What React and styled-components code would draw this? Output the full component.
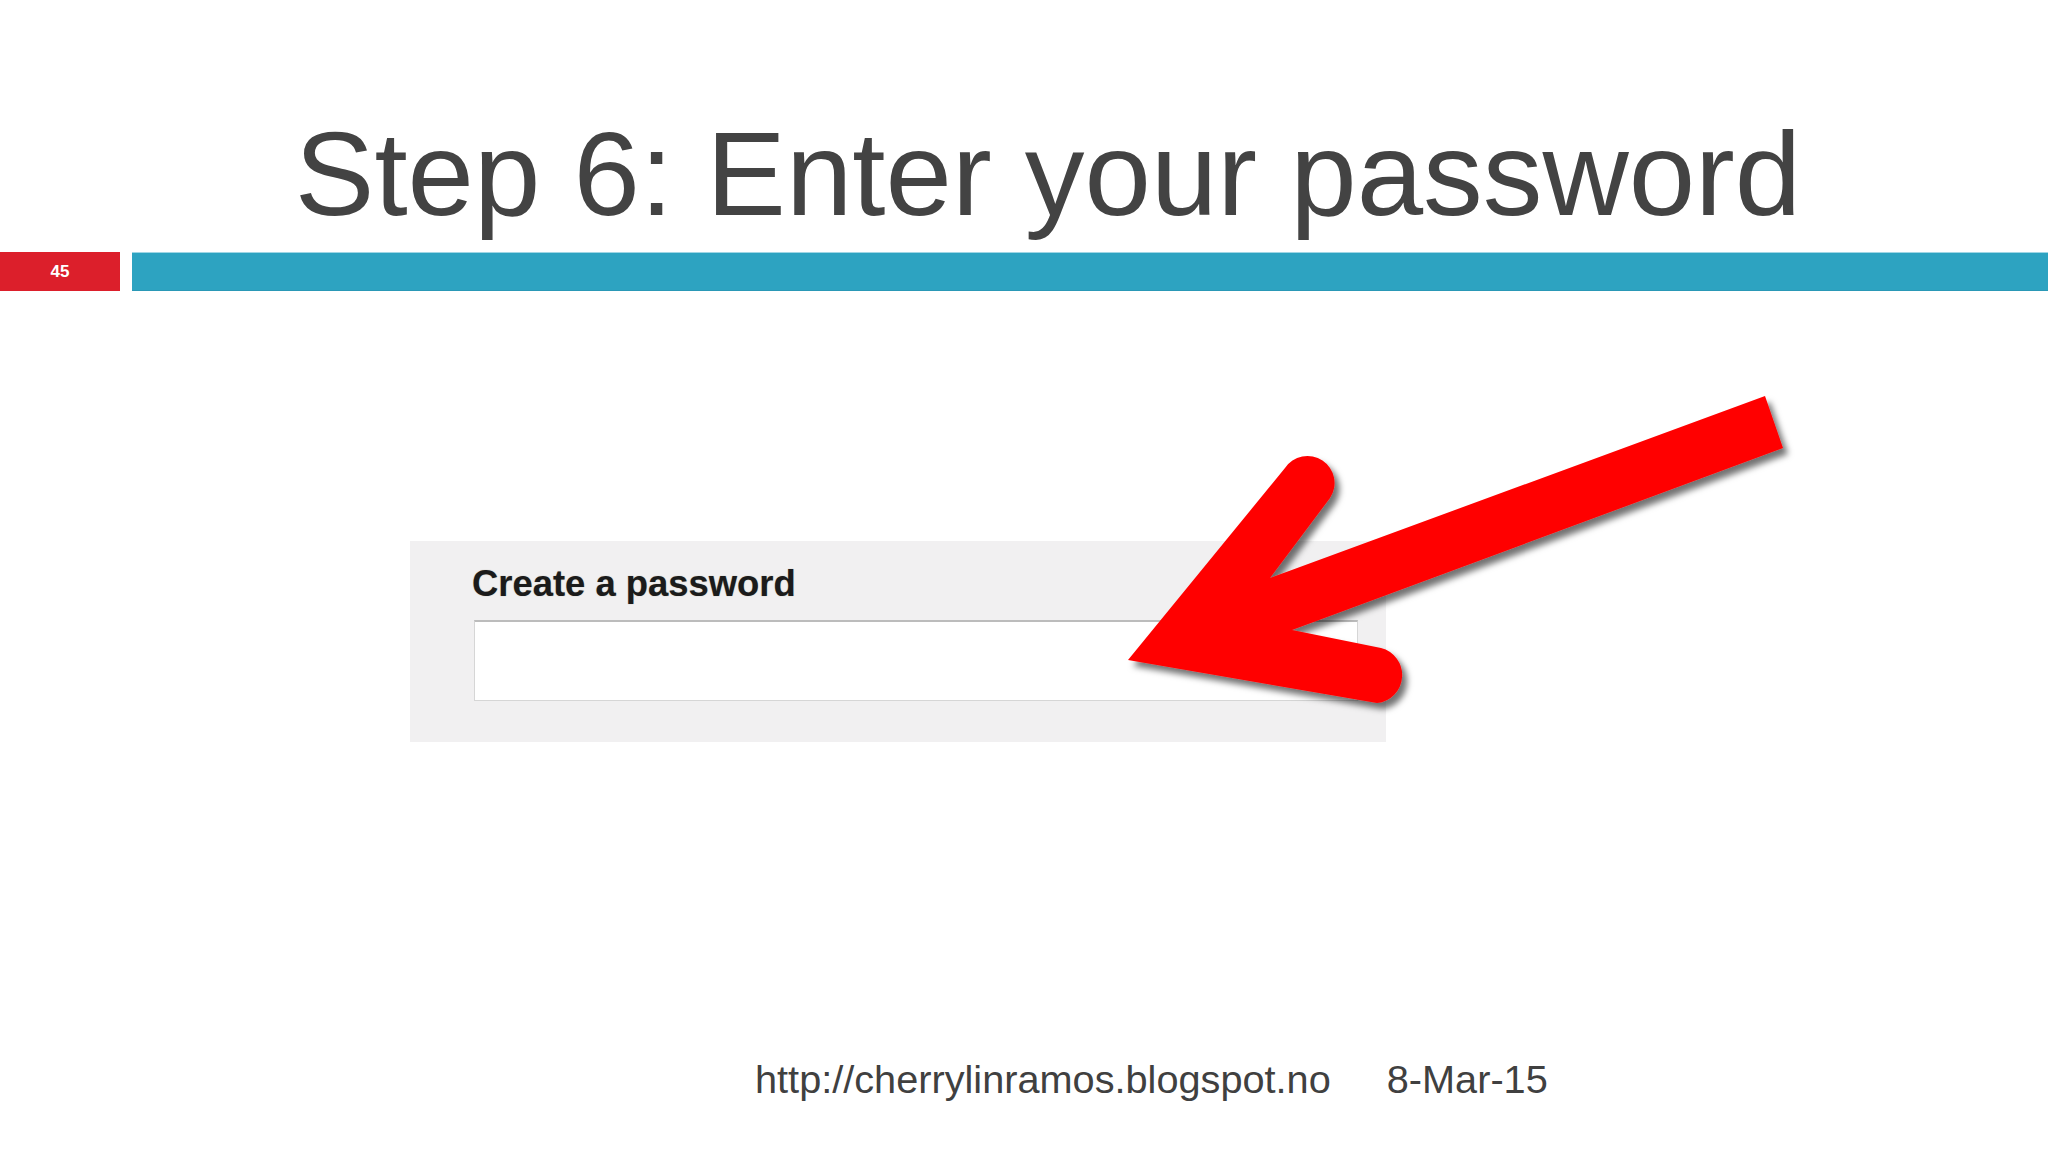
import React from 'react';
import styled, { createGlobalStyle } from 'styled-components';

const GlobalStyle = createGlobalStyle`
  html, body {
    margin: 0;
    padding: 0;
    background: #ffffff;
  }
  body {
    font-family: "Liberation Sans", Arial, sans-serif;
  }
`;

export default function App() {
  return (
    <>
      <GlobalStyle />
      <Slide>
        <Title>Step 6: Enter your password</Title>
        <BarRow>
          <SlideNumber>45</SlideNumber>
          <AccentBar />
        </BarRow>
        <Stage>
          <PasswordPanel>
            <FieldLabel>Create a password</FieldLabel>
            <PasswordInput type="password" />
          </PasswordPanel>
        </Stage>
        <Footer>
          <FooterText>http://cherrylinramos.blogspot.no</FooterText>
          <FooterText>8-Mar-15</FooterText>
        </Footer>
        <ArrowOverlay viewBox="0 0 2048 1152" width="2048" height="1152">
          <defs>
            <filter id="arrowShadow" x="-10%" y="-10%" width="130%" height="130%">
              <feDropShadow dx="5" dy="6" stdDeviation="3" floodColor="#000" floodOpacity="0.55" />
            </filter>
          </defs>
          <path
            filter="url(#arrowShadow)"
            fill="#ff0000"
            d="M 1128 660
               L 1285 468
               A 27 27 0 0 1 1330 498
               L 1270 578
               L 1765 396
               L 1783 448
               L 1292 630
               L 1381 648
               A 28 28 0 0 1 1377 703
               Z"
          />
        </ArrowOverlay>
      </Slide>
    </>
  );
}

const Slide = styled.div`
  position: relative;
  width: 2048px;
  height: 1152px;
  overflow: hidden;
  display: flex;
  flex-direction: column;
  background: #ffffff;
`;

const Title = styled.h1`
  margin: 114px 0 0;
  padding-left: 48px;
  text-align: center;
  font-family: "Liberation Sans", Arial, sans-serif;
  font-weight: 400;
  font-size: 119.4px;
  line-height: 1;
  color: #434343;
  white-space: nowrap;
`;

const BarRow = styled.div`
  display: flex;
  gap: 12px;
  height: 39px;
  margin-top: 19px;
`;

const SlideNumber = styled.div`
  width: 120px;
  background: #dc1f2b;
  color: #ffffff;
  font-family: "Liberation Sans", Arial, sans-serif;
  font-weight: 700;
  font-size: 17px;
  display: flex;
  align-items: center;
  justify-content: center;
`;

const AccentBar = styled.div`
  flex: 1;
  background: #2da3c1;
  border-top: 1px solid #9fd6e5;
  border-bottom: 1px solid #2a98b6;
`;

const Stage = styled.div`
  display: flex;
  padding: 250px 0 0 410px;
`;

const PasswordPanel = styled.div`
  width: 976px;
  box-sizing: border-box;
  padding: 25px 28px 41px 62px;
  background: #f1f0f1;
  display: flex;
  flex-direction: column;
  gap: 17px;
`;

const FieldLabel = styled.div`
  font-family: "Liberation Sans", Arial, sans-serif;
  font-weight: 700;
  font-size: 36.4px;
  line-height: 1;
  color: #1b1b1b;
  text-shadow: 0 0 1px rgba(60, 50, 20, 0.45);
`;

const PasswordInput = styled.input`
  margin: 0 0 0 2px;
  height: 81px;
  box-sizing: border-box;
  background: #ffffff;
  border: 1px solid #d6d6d6;
  border-top: 2px solid #bcbcbc;
  outline: none;
`;

const Footer = styled.div`
  margin-top: auto;
  padding: 0 0 52px 755px;
  display: flex;
  gap: 56px;
`;

const FooterText = styled.span`
  font-family: "Liberation Sans", Arial, sans-serif;
  font-size: 39.7px;
  line-height: 1;
  color: #404040;
`;

const ArrowOverlay = styled.svg`
  position: absolute;
  left: 0;
  top: 0;
  pointer-events: none;
`;
